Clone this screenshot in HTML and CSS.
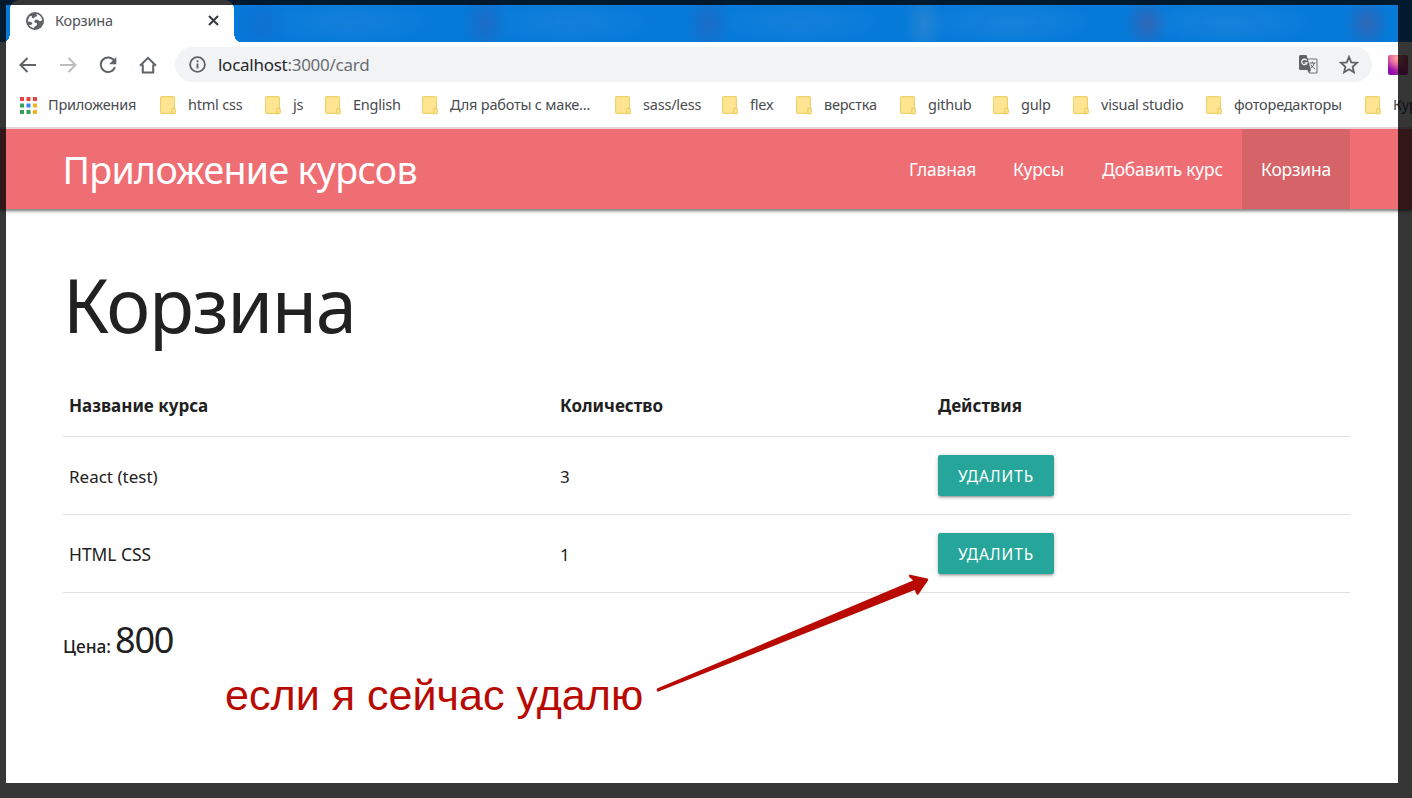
FILE: index.html
```html
<!DOCTYPE html>
<html lang="ru">
<head>
<meta charset="utf-8">
<title>Корзина</title>
<link rel="stylesheet" href="styles.css">
</head>
<body>
<svg class="defs" width="0" height="0" aria-hidden="true">
  <symbol id="folder" viewBox="0 0 17 19">
    <rect x=".6" y=".6" width="13.8" height="16.8" rx="1.4" fill="#ffe591" stroke="#ecd26d" stroke-width="1.2"/>
    <path d="M11.800 17.500v-4.300q0-1 1-1h1.400q1 0 1 1v3.500q0 1-1 1h-2.400z" fill="#ffe591" stroke="#e8cc5c" stroke-width="1.100"/>
  </symbol>
</svg>
<div class="window">
  <header class="tabs">
    <div class="tab">
      <svg class="globe" width="18" height="18" viewBox="0 0 18 18"><circle cx="9" cy="9" r="9" fill="#5f6368"/><path d="M1.9 9.6C2 7 3 5 4.700 3.800L5.800 4.300 5.900 5.800 8 6.600 8.600 5 10.600 4.600 11.100 3.200 9.900 2C13.500 2.300 16 5 16.200 8.600L13.200 9.200 12.100 7.800 9.300 7.700 8.200 9.300 9 10.700 11 11.300 10.900 13.200 9 14.200 8 16C6 15.800 4.100 14.700 3 13L6.200 12.600 6.300 10.700 4.400 9.700Z" fill="#fff"/></svg>
      <span class="tab-title">Корзина</span>
      <svg class="close" width="11" height="11" viewBox="0 0 11 11"><path d="M1 1l9 9M10 1l-9 9" stroke="#36393d" stroke-width="2"/></svg>
    </div>
  </header>
  <div class="toolbar">
    <div class="controls">
      <svg width="18" height="16" viewBox="0 0 18 16"><path d="M17 8H2M8.500 1L1.500 8l7 7" fill="none" stroke="#5f6368" stroke-width="2"/></svg>
      <svg width="18" height="16" viewBox="0 0 18 16"><path d="M1 8h15M9.500 1l7 7-7 7" fill="none" stroke="#bbbdc0" stroke-width="2"/></svg>
      <svg width="18" height="18" viewBox="0 0 18 18"><path d="M15.300 4.800A7.300 7.300 0 1 0 16 11.200" fill="none" stroke="#5f6368" stroke-width="2"/><path d="M17.300 1v7.200h-7.200z" fill="#5f6368"/></svg>
      <svg width="18" height="18" viewBox="0 0 18 18"><path d="M1 9.800L9 1.800l8 8M3.800 8.500v7.900h10.400V8.500" fill="none" stroke="#5f6368" stroke-width="2"/></svg>
    </div>
    <div class="address">
      <svg width="17" height="17" viewBox="0 0 17 17"><circle cx="8.500" cy="8.500" r="7.400" fill="none" stroke="#5f6368" stroke-width="1.800"/><path d="M8.500 7.400v5M8.500 4.300v1.900" stroke="#5f6368" stroke-width="1.900"/></svg>
      <span class="url">localhost<span class="path">:3000/card</span></span>
      <svg class="translate" width="19" height="19" viewBox="0 0 19 19"><path d="M8 4h9q1 0 1 1v12q0 1-1 1h-6.500L8.800 15" fill="#f1f3f4" stroke="#73777b" stroke-width="1.100"/><path d="M1.500 0H7.500L12 15H1.500Q0 15 0 13.500V1.500Q0 0 1.500 0Z" fill="#5f6368"/><path d="M8.800 15h3.200l-1.800 3z" fill="#5f6368"/><path d="M7.700 5.400A2.700 2.700 0 1 0 8 7.900H5.500" fill="none" stroke="#f1f3f4" stroke-width="1.300"/><path d="M10.500 8h6M13.300 6.500V8M15.500 8q-.8 3-4 5.300M11.700 9.500q1.300 2.700 4.300 4.500" fill="none" stroke="#5f6368"/></svg>
      <svg class="star" width="20" height="19" viewBox="0 0 20 19"><path d="M10 1.800l2.200 5.500 5.900.5-4.500 3.900 1.300 5.600-4.900-3-4.900 3 1.300-5.600-4.500-3.900 5.900-.5z" fill="none" stroke="#5f6368" stroke-width="1.800"/></svg>
    </div>
    <span class="extension"></span>
  </div>
  <nav class="bookmarks">
    <a style="width:140px"><svg class="apps" width="17" height="17" viewBox="0 0 17 17"><path d="M0 0h4v4H0zM6.500 0h4v4h-4zM13 0h4v4h-4z" fill="#e8453c"/><path d="M0 6.500h4v4H0zM0 13h4v4H0zM6.500 13h4v4h-4z" fill="#35a155"/><path d="M6.500 6.500h4v4h-4z" fill="#3a86f0"/><path d="M13 6.500h4v4h-4zM13 13h4v4h-4z" fill="#f5b01a"/></svg><span>Приложения</span></a>
    <a style="width:105px"><svg><use href="#folder"/></svg><span>html css</span></a>
    <a style="width:60px"><svg><use href="#folder"/></svg><span>js</span></a>
    <a style="width:97px"><svg><use href="#folder"/></svg><span>English</span></a>
    <a style="width:193px"><svg><use href="#folder"/></svg><span>Для работы с маке...</span></a>
    <a style="width:107px"><svg><use href="#folder"/></svg><span>sass/less</span></a>
    <a style="width:74px"><svg><use href="#folder"/></svg><span>flex</span></a>
    <a style="width:104px"><svg><use href="#folder"/></svg><span>верстка</span></a>
    <a style="width:93px"><svg><use href="#folder"/></svg><span>github</span></a>
    <a style="width:80px"><svg><use href="#folder"/></svg><span>gulp</span></a>
    <a style="width:133px"><svg><use href="#folder"/></svg><span>visual studio</span></a>
    <a style="width:159px"><svg><use href="#folder"/></svg><span>фоторедакторы</span></a>
    <a style="width:47px"><svg><use href="#folder"/></svg><span>Кур</span></a>
  </nav>
  <div class="navbar">
    <a class="brand">Приложение курсов</a>
    <ul class="menu">
      <li class="home">Главная</li>
      <li class="courses">Курсы</li>
      <li class="add">Добавить курс</li>
      <li class="cart active">Корзина</li>
    </ul>
  </div>
  <main class="content">
    <h1>Корзина</h1>
    <div class="row head"><span>Название курса</span><span>Количество</span><span>Действия</span></div>
    <div class="row"><span>React (test)</span><span>3</span><span><button class="btn">УДАЛИТЬ</button></span></div>
    <div class="row"><span class="caps">HTML CSS</span><span>1</span><span><button class="btn">УДАЛИТЬ</button></span></div>
    <p class="price"><strong>Цена:</strong><span class="sum">800</span></p>
  </main>
</div>
<div class="shade"></div>
<div class="note">если я сейчас удалю</div>
<svg class="arrow" width="280" height="130" viewBox="650 570 280 130"><path d="M658 689.400L915.300 580.900 910 575.800 927 579.700 917.500 593.600 915.400 588.500 658 690.400Z" fill="#b80a02" stroke="#b80a02" stroke-width="2.400" stroke-linejoin="round"/></svg>
</body>
</html>
```

FILE: styles.css
```css
* { box-sizing: border-box; }
body { margin: 0; overflow: hidden; background: #fff; font-family: "Noto Sans", "Open Sans", sans-serif; color: #212121; }
.defs { position: absolute; }
.window { width: 1412px; height: 798px; overflow: hidden; background: #fff; }

.tabs {
  height: 42px; padding-left: 10px; display: flex;
  background:
    radial-gradient(ellipse 22px 36px at 485px 23px, #1c6cc8, transparent),
    radial-gradient(ellipse 22px 36px at 708px 23px, #1c6cc8, transparent),
    radial-gradient(ellipse 20px 36px at 924px 23px, #2484d3, transparent),
    radial-gradient(ellipse 22px 26px at 1147px 23px, #3168b8, transparent),
    radial-gradient(ellipse 22px 26px at 1367px 23px, #3168b8, transparent),
    radial-gradient(ellipse 26px 30px at 262px 24px, #0f71d0, transparent),
    radial-gradient(ellipse 90px 24px at 350px 22px, #1480da, transparent),
    radial-gradient(ellipse 90px 24px at 570px 22px, #1480da, transparent),
    radial-gradient(ellipse 90px 24px at 800px 22px, #1480da, transparent),
    radial-gradient(ellipse 90px 24px at 1010px 22px, #1782da, transparent),
    radial-gradient(ellipse 90px 24px at 1230px 22px, #1782da, transparent),
    #067ad9;
}
.tab {
  position: relative; width: 224px; height: 42px; padding: 0 15px 1px 16px;
  display: flex; align-items: center; border-radius: 9px 9px 0 0; background: #fff;
}
.tab::before, .tab::after { content: ""; position: absolute; bottom: 0; width: 6px; height: 9px; }
.tab::before { left: -6px; background: radial-gradient(ellipse 6px 9px at 0 0, transparent 97%, #fff); }
.tab::after { right: -6px; background: radial-gradient(ellipse 6px 9px at 100% 0, transparent 97%, #fff); }
.tab-title { margin-left: 11px; flex: 1; padding-bottom: 1px; font-size: 14.5px; letter-spacing: -.2px; color: #505458; }
.tab svg { flex: none; }

.toolbar { height: 46px; padding-bottom: 1px; display: flex; align-items: center; }
.controls { width: 175px; padding-left: 19px; display: flex; align-items: center; gap: 22px; }
.address { width: 1197px; height: 35px; padding: 0 13px 0 14px; display: flex; align-items: center; border-radius: 18px; background: #f1f3f4; }
.url { margin-left: 12px; flex: 1; font-size: 17px; line-height: 35px; letter-spacing: -.27px; color: #26282b; }
.path { color: #6a6e73; }
.star { margin: 0 0 0 21px; }
.extension { width: 20px; height: 20px; margin-left: 16px; border-radius: 2px; background: radial-gradient(circle at 45% 15%, #ffa6a0, transparent 60%), linear-gradient(45deg, #8b10ad 15%, #dc3c9a 55%, #c94a68); }

.bookmarks { height: 39px; padding: 0 0 5px 20px; display: flex; align-items: center; }
.bookmarks a { flex: none; display: flex; align-items: center; gap: 11px; font-size: 14.5px; letter-spacing: -.21px; color: #484b4f; white-space: nowrap; }
.bookmarks span { padding-bottom: 2px; }
.bookmarks svg { width: 17px; height: 19px; flex: none; }
.bookmarks .apps { width: 17px; height: 17px; }

.navbar {
  position: relative; height: 82px; padding: 0 62px 0 62px; display: flex; justify-content: space-between;
  border-top: 2px solid #e8d3d8; background: #ee6e73;
  box-shadow: 0 2px 2px rgba(0,0,0,.2), 0 3px 3px -1px rgba(0,0,0,.3), 0 1px 6px rgba(0,0,0,.16);
  color: #fff; clip-path: inset(0 0 -12px 0);
}
.brand { padding-left: .5px; font-size: 37.5px; line-height: 82px; letter-spacing: -.65px; }
.menu { margin: 0; padding: 0; display: flex; list-style: none; font-size: 17.4px; line-height: 80px; letter-spacing: -.18px; text-align: center; }
.home { width: 103px; }
.courses { width: 89px; }
.add { width: 159px; }
.cart { width: 108px; }
.active { background: #d66367; }

.content { padding: 54px 62px 0 63px; }
h1 { height: 82px; margin: 0 0 30px; font-size: 74px; font-weight: 400; line-height: 83px; letter-spacing: -1.4px; }
.row { height: 78px; display: grid; grid-template-columns: 491px 378px 1fr; align-items: center; border-bottom: 1px solid #dfdfdf; padding: 1px 0 0 6px; font-size: 17px; }
.caps { font-size: 17.4px; }
.row.head { height: 62px; padding-top: 0; font-weight: 700; }
.btn {
  display: block; width: 116px; height: 41px; margin-top: -1px; padding: 1px 0 0; border: 0; border-radius: 2px; background: #26a69a; color: #fff;
  font: 15.5px "Noto Sans", sans-serif; letter-spacing: .9px;
  box-shadow: 0 2px 2px rgba(0,0,0,.14), 0 3px 1px -2px rgba(0,0,0,.12), 0 1px 5px rgba(0,0,0,.2);
}
.price { margin: 17px 0 0; height: 60px; display: flex; align-items: baseline; gap: 4px; line-height: 60px; }
.price strong { font-size: 17.3px; font-weight: 500; }
.sum { font-size: 36px; letter-spacing: -1.2px; }

/* dims everything outside the selected area */
.shade { position: absolute; left: 6px; top: 5px; width: 1392px; height: 778px; box-shadow: 0 0 0 30px rgba(0,0,0,.79); }
.note { position: absolute; left: 225px; top: 665px; font: 43.1px/60px "Liberation Sans", sans-serif; color: #b80a02; white-space: nowrap; }
.arrow { position: absolute; left: 650px; top: 570px; }
```
